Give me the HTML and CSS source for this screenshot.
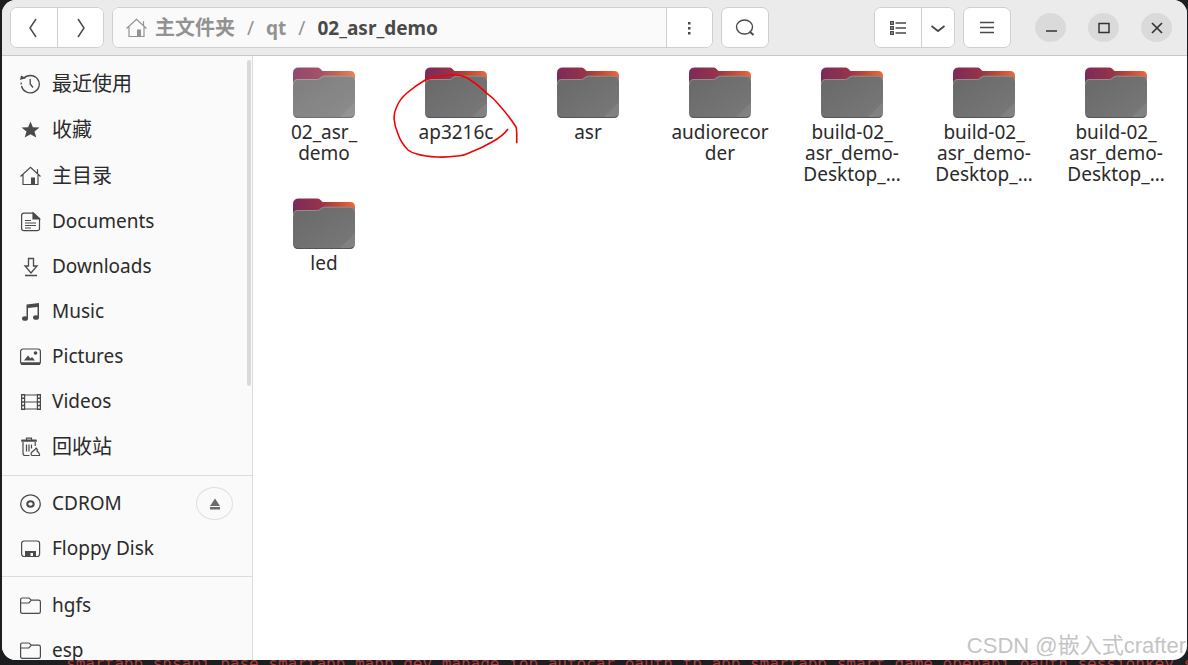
FILE: index.html
```
<!DOCTYPE html>
<html lang="en">
<head>
    <meta charset="UTF-8">
    <meta name="viewport" content="width=device-width, initial-scale=1.0">
    <title>02_asr_demo</title>
    <link rel="stylesheet" href="styles.css">
</head>
<body>
    <svg class="defs" aria-hidden="true">
        <defs>
            <linearGradient id="tabColor" x1="0" y1="0" x2="1" y2="0">
                <stop offset="0" stop-color="#7c2a57"/>
                <stop offset="0.45" stop-color="#96344b"/>
                <stop offset="0.7" stop-color="#c4472f"/>
                <stop offset="1" stop-color="#f0683c"/>
            </linearGradient>
            <linearGradient id="frontColor" x1="0" y1="0" x2="1" y2="1">
                <stop offset="0" stop-color="#686868"/>
                <stop offset="1" stop-color="#797979"/>
            </linearGradient>
            <symbol id="home" viewBox="0 0 21 20">
                <path d="M0.5 10.5 10.5 1.2 20.5 10.5M3 9v9.5h15V9M17.5 3.2v4" fill="none" stroke="currentColor" stroke-width="1.2"/>
                <path d="M11 11.5h4v7h-4z" fill="currentColor"/>
            </symbol>
            <symbol id="folder" viewBox="0 0 21 20">
                <path d="M0.6 15.5V3.8q0-1.8 1.8-1.8h6q1 0 1.6.8l1.2 1.3h7.4q1.8 0 1.8 1.8v9.6q0 1.9-1.8 1.9H2.4q-1.8 0-1.8-1.9zM.6 7h8.2l2.6-2.9" fill="none" stroke="currentColor" stroke-width="1.2"/>
            </symbol>
            <symbol id="bigFolder" viewBox="0 0 62 51">
                <path d="M0 6q0-5.500 6-5.500h18q2 0 3 1l2.500 2.500H57q5 0 5 5V28H0z" fill="url(#tabColor)"/>
                <path d="M0 17q0-5 5-5h19q1.500 0 2.500-1l2-1.500q1-.8 2.500-.8h26q5 0 5 4.500V46q0 5-5 5H5q-5 0-5-5z" fill="url(#frontColor)"/>
                <path d="M.5 17.500q0-5 4.500-5h19.500q1.500 0 2.500-1l2-1.500q1-.8 2.500-.8H57q4.500 0 4.500 4.500" fill="none" stroke="#8f8f8f"/>
                <path d="M62 35v11q0 5-5 5H46z" fill="#fff" opacity=".08"/>
                <path d="M1.500 48.500q1.200 2 3.500 2h52q2.300 0 3.500-2" fill="none" stroke="#555"/>
            </symbol>
        </defs>
    </svg>

    <div class="window">
        <header class="toolbar">
            <div class="group">
                <button class="btn" aria-label="Back"><svg width="20" height="20" fill="none" stroke="currentColor" stroke-width="1.5"><path d="M12 1 6 10l6 9"/></svg></button>
                <button class="btn" aria-label="Forward"><svg width="20" height="20" fill="none" stroke="currentColor" stroke-width="1.5"><path d="M7 1l6 9-6 9"/></svg></button>
            </div>
            <div class="group path-bar">
                <nav class="path">
                    <a href="#"><svg width="21" height="20"><use href="#home"/></svg><span lang="zh">主文件夹</span></a>
                    <span class="slash">/</span>
                    <a href="#">qt</a>
                    <span class="slash">/</span>
                    <a href="#" class="current">02_asr_demo</a>
                </nav>
                <button class="btn" aria-label="Folder menu"><svg width="20" height="20" fill="currentColor"><path d="M8 4h2.500v2.500H8zM8 9h2.500v2.500H8zM8 14h2.500v2.500H8z"/></svg></button>
            </div>
            <button class="btn single" aria-label="Search"><svg width="20" height="20" fill="none" stroke="currentColor" stroke-width="1.400"><ellipse cx="9.500" cy="9" rx="8" ry="7"/><path d="M14.500 13.500l4 3.500" stroke-width="2"/></svg></button>
            <div class="group view-group">
                <button class="btn" aria-label="List view"><svg width="20" height="20" fill="none" stroke="currentColor" stroke-width="1.400"><path d="M2.700 3.700h2.600v2.600H2.700zM2.700 8.700h2.600v2.600H2.700zM2.700 13.700h2.600v2.600H2.700zM7.500 5H18M7.500 10H18M7.500 15H18"/></svg></button>
                <button class="btn narrow" aria-label="View options"><svg width="16" height="20" fill="none" stroke="currentColor" stroke-width="1.800"><path d="M1.500 8 8 13l6.500-5"/></svg></button>
            </div>
            <button class="btn single" aria-label="Menu"><svg width="20" height="20" fill="none" stroke="currentColor" stroke-width="1.500"><path d="M3 4.500h14M3 9.500h14M3 14.500h14"/></svg></button>
            <div class="controls">
                <button aria-label="Minimize"><svg width="14" height="14" fill="none" stroke="currentColor" stroke-width="1.500"><path d="M2 10h11"/></svg></button>
                <button aria-label="Maximize"><svg width="14" height="14" fill="none" stroke="currentColor" stroke-width="1.500"><path d="M2 2.500h10v9H2z"/></svg></button>
                <button aria-label="Close"><svg width="14" height="14" fill="none" stroke="currentColor" stroke-width="1.700"><path d="M2 2l10 10M12 2 2 12"/></svg></button>
            </div>
        </header>

        <div class="content">
            <aside class="sidebar">
                <ul>
                    <li><a href="#" lang="zh"><svg width="21" height="20" fill="none" stroke="currentColor" stroke-width="1.300"><path d="M3.500 4.500A9 8.700 0 1 1 1.500 12" /><path d="M1.200 8.500v2" /><path d="M10.200 5v5l2.800 3.500"/><path d="M0 6 1 1.500 6 4z" fill="currentColor" stroke="none"/></svg>最近使用</a></li>
                    <li><a href="#" lang="zh"><svg width="21" height="20"><path d="M10.500 1.500l2.400 5.700 6.600.4-5 4 1.800 6-5.800-3.400-5.800 3.400 1.800-6-5-4 6.600-.4z" fill="currentColor"/></svg>收藏</a></li>
                    <li><a href="#" lang="zh"><svg width="21" height="20"><use href="#home"/></svg>主目录</a></li>
                    <li><a href="#"><svg width="21" height="20" fill="none" stroke="currentColor" stroke-width="1.200"><path d="M13.500 1.200H4Q1.600 1.200 1.600 3.500v13q0 2.200 2.400 2.200h13q2.500 0 2.500-2.200V6.500z"/><path d="M13 1v6h6.500z" fill="currentColor"/><path d="M5 8.500h6M5 11h11M5 13.500h11M5 16h6"/></svg>Documents</a></li>
                    <li><a href="#"><svg width="21" height="20" fill="none" stroke="currentColor" stroke-width="1.300"><path d="M8.500 1.500h5v7.500h3.500l-6 7-6-7h3.500zM5 18.500h12"/></svg>Downloads</a></li>
                    <li><a href="#"><svg width="21" height="20"><path d="M6.500 2.500 19 1v14h-1.500V5L8 6v10.500H6.500z" fill="currentColor"/><ellipse cx="5" cy="16.500" rx="3" ry="2.300" fill="currentColor"/><ellipse cx="16" cy="15.500" rx="3" ry="2.300" fill="currentColor"/></svg>Music</a></li>
                    <li><a href="#"><svg width="21" height="20" fill="none" stroke="currentColor" stroke-width="1.200"><rect x=".6" y="2" width="19.800" height="15.500" rx="2.500"/><path d="M1 16.500h19" stroke-width="2.500"/><path d="M4 13.500l4-5 2.500 3 1.500-1.500 3 3.500z" fill="currentColor" stroke="none"/><circle cx="15.500" cy="6" r="1.800" fill="currentColor" stroke="none"/></svg>Pictures</a></li>
                    <li><a href="#"><svg width="21" height="20" fill="none" stroke="currentColor" stroke-width="1.200"><path d="M1.600 2v16M4.600 2v16M17.400 2v16M20.400 2v16M4.500 3h13M4.500 10h13M4.500 17h13"/><path d="M3 2v16M19 2v16" stroke-width="3" stroke-dasharray="1.500 2.100"/></svg>Videos</a></li>
                    <li><a href="#" lang="zh"><svg width="21" height="20" fill="none" stroke="currentColor" stroke-width="1.200"><path d="M1 4h16M6.500 3.500V1.200h5v2.300M3 5v11q0 2.500 2 2.500h4.500M15.200 5v4M6.500 7.500v7M9 7.500v7M11.500 7.500v4"/><path d="M1.500 3.500h15" stroke-width="2"/><path d="M12 18.500q-2-1.500 0-3.500l3-2.500 1-1.500q2 1.500 1 3 3 2.500 2.500 4.500z"/></svg>回收站</a></li>
                </ul>
                <ul>
                    <li>
                        <a href="#"><svg width="21" height="20" fill="none" stroke="currentColor" stroke-width="1.300"><ellipse cx="10.500" cy="10" rx="9.800" ry="9.200"/><ellipse cx="10.500" cy="10" rx="3.200" ry="2.800" stroke-width="2"/></svg>CDROM</a>
                        <button class="eject" aria-label="Eject"><svg width="14" height="14" fill="currentColor"><path d="M7 1.500 12 9H2zM2 10h10v2.500H2z"/></svg></button>
                    </li>
                    <li><a href="#"><svg width="21" height="20" fill="none" stroke="currentColor" stroke-width="1.200"><rect x="1.600" y="2" width="18" height="15.500" rx="2.500"/><path d="M5 18v-6h11v6h-3v-4h-2.500v4z" fill="currentColor" stroke="none"/></svg>Floppy Disk</a></li>
                </ul>
                <ul>
                    <li><a href="#"><svg width="21" height="20"><use href="#folder"/></svg>hgfs</a></li>
                    <li><a href="#"><svg width="21" height="20"><use href="#folder"/></svg>esp</a></li>
                </ul>
            </aside>

            <main class="files">
                <a href="#" class="file cut"><svg width="62" height="51"><use href="#bigFolder"/></svg><span>02_asr_<br>demo</span></a>
                <a href="#" class="file"><svg width="62" height="51"><use href="#bigFolder"/></svg><span>ap3216c</span>
                    <svg class="mark" width="128" height="86" fill="none" stroke="#f40000" stroke-width="1.600"><path d="M116 55q-5 7-16 13-10 6-22 10.500Q71 82 65 82q-10 1.500-20 1-12-.5-20-3-6-1.500-9-4Q9 69 6 60 2.500 52 2 44q0-6 3-12 3-7 10-13 8-7 19-13.500Q46 2 60 .8q8-.3 15 3 10 6 20 15.500 7 5 13 12.700 9 10 16 21 1 2 .7 16.300"/></svg>
                </a>
                <a href="#" class="file"><svg width="62" height="51"><use href="#bigFolder"/></svg><span>asr</span></a>
                <a href="#" class="file"><svg width="62" height="51"><use href="#bigFolder"/></svg><span>audiorecor<br>der</span></a>
                <a href="#" class="file"><svg width="62" height="51"><use href="#bigFolder"/></svg><span>build-02_<br>asr_demo-<br>Desktop_…</span></a>
                <a href="#" class="file"><svg width="62" height="51"><use href="#bigFolder"/></svg><span>build-02_<br>asr_demo-<br>Desktop_…</span></a>
                <a href="#" class="file"><svg width="62" height="51"><use href="#bigFolder"/></svg><span>build-02_<br>asr_demo-<br>Desktop_…</span></a>
                <a href="#" class="file"><svg width="62" height="51"><use href="#bigFolder"/></svg><span>led</span></a>
            </main>
        </div>
    </div>
    <div class="terminal">smartapp_snsapi_base,smartapp_mapp_dev_manage,iop_autocar,oauth_tp_app,smartapp_smart_game_openapi,oauth_sessionkey,smartapp</div>
    <div class="watermark">CSDN @嵌入式crafter</div>
</body>
</html>
```
FILE: styles.css
```
* {
    box-sizing: border-box;
}
body {
    margin: 0;
    height: 100vh;
    display: flex;
    flex-direction: column;
    overflow: hidden;
    background: #1c1e20;
    color: #2b2b2b;
    font-family: "Noto Sans", "Noto Sans CJK SC", sans-serif;
    font-size: 19px;
}
a {
    color: inherit;
    text-decoration: none;
}
button {
    padding: 0;
    border: none;
    color: #4a4a4a;
    display: flex;
    align-items: center;
    justify-content: center;
}
svg {
    flex: none;
}
.defs {
    position: absolute;
    width: 0;
    height: 0;
}
.window {
    flex: 1;
    min-height: 0;
    margin: 0 1px 0 2px;
    display: flex;
    flex-direction: column;
    border-radius: 14px;
    overflow: hidden;
    background: #fff;
}

/* toolbar */
.toolbar {
    height: 56px;
    flex: none;
    display: flex;
    align-items: center;
    gap: 8px;
    padding: 0 15px 0 8px;
    background: #ebebeb;
    border-bottom: 1px solid #c8c8c8;
}
.group,
.single {
    height: 41px;
    border: 1px solid #cfcfcf;
    border-radius: 7px;
    overflow: hidden;
    background: #fff;
}
.group {
    display: flex;
}
.btn {
    width: 46px;
    background: #fff;
}
.btn + .btn,
.path + .btn {
    border-left: 1px solid #cfcfcf;
}
.btn.single {
    width: 48px;
}
.btn.narrow {
    width: 33px;
}
.path-bar {
    flex: 0 1 601px;
}
.path {
    flex: 1;
    display: flex;
    align-items: center;
    gap: 12px;
    padding-left: 13px;
    background: #fafafa;
    color: #929292;
    font-weight: bold;
    line-height: 24px;
}
.path a {
    display: flex;
    align-items: center;
    gap: 8px;
}
.path .slash {
    font-weight: normal;
}
.path .current {
    color: #4a4a4a;
}
:lang(zh) {
    font-size: 20px;
}
.view-group {
    margin-left: auto;
}
.controls {
    display: flex;
    gap: 22px;
    margin-left: 16px;
}
.controls button {
    width: 31px;
    height: 29px;
    border-radius: 50%;
    background: #dadada;
    color: #333;
}

/* sidebar */
.content {
    flex: 1;
    min-height: 0;
    display: flex;
}
.sidebar {
    position: relative;
    width: 251px;
    flex: none;
    overflow: hidden;
    background: #fafafa;
    border-right: 1px solid #dcdcdc;
}
.sidebar::after {
    content: "";
    position: absolute;
    top: 4px;
    right: 1px;
    width: 4px;
    height: 54%;
    border-radius: 2px;
    background: #d9d9d9;
}
.sidebar ul {
    list-style: none;
    margin: 0;
    padding: 5px 19px 5px 18px;
}
.sidebar ul + ul {
    border-top: 1px solid #dcdcdc;
}
.sidebar ul:last-child {
    padding-top: 6px;
}
.sidebar li {
    display: flex;
    align-items: center;
}
.sidebar a {
    flex: 1;
    display: flex;
    align-items: center;
    gap: 11px;
    line-height: 25px;
    padding: 10px 0;
}
.sidebar a:lang(zh) {
    line-height: 26px;
}
.sidebar svg {
    color: #4a4a4a;
}
.eject {
    width: 37px;
    height: 33px;
    border: 1px solid #dedede;
    border-radius: 50%;
    background: #fafafa;
}
.eject svg {
    color: #6c6c6c;
}

/* files */
.files {
    flex: 1;
    display: grid;
    grid-template-columns: repeat(auto-fill, minmax(128px, 1fr));
    align-content: start;
    gap: 2px 0;
    padding: 0 5px;
}
.file {
    position: relative;
    display: flex;
    flex-direction: column;
    align-items: center;
    gap: 4px;
    padding-top: 11px;
    line-height: 21px;
    text-align: center;
}
.cut > svg {
    opacity: 0.85;
}
.mark {
    position: absolute;
    top: 18px;
    left: 2px;
}

.terminal {
    height: 5px;
    flex: none;
    overflow: hidden;
    padding-left: 66px;
    font: 16px/8px "DejaVu Sans Mono", monospace;
    white-space: nowrap;
    color: #a83c3c;
}
.watermark {
    position: absolute;
    right: 2px;
    bottom: 5px;
    font: 22px/28px "Liberation Sans", "Noto Sans CJK SC", sans-serif;
    color: #c4c4c4;
}
```
